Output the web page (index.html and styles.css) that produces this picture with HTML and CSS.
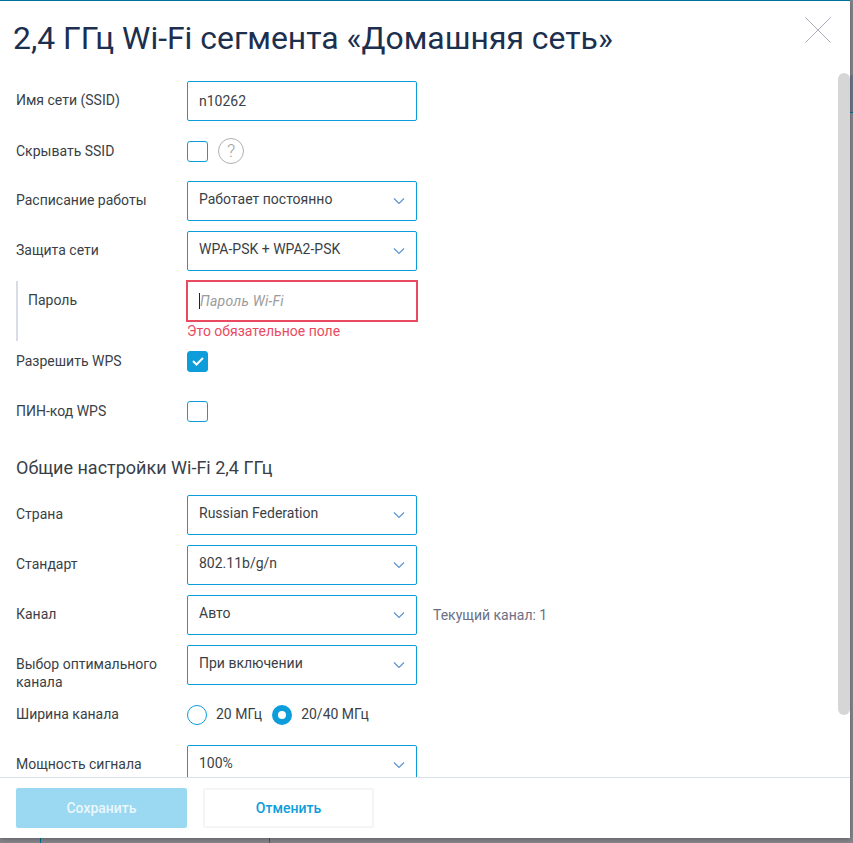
FILE: index.html
```html
<!DOCTYPE html>
<html lang="ru">

<head>
    <meta charset="UTF-8">
    <title>Wi-Fi</title>
    <link rel="stylesheet" href="styles.css">
</head>

<body>

    <div class="backdrop">
        <div class="backdrop__piece backdrop__piece--panel"></div>
        <div class="backdrop__piece backdrop__piece--line-right"></div>
        <div class="backdrop__piece backdrop__piece--line-a"></div>
        <div class="backdrop__piece backdrop__piece--line-b"></div>

        <div class="modal">
            <div class="modal__head">
                <h1 class="modal__title">2,4 ГГц Wi-Fi сегмента «Домашняя сеть»</h1>
                <svg class="modal__close" width="26" height="26" viewBox="0 0 26 26">
                    <path d="M0.5 0.5L25.5 25.5M25.5 0.5L0.5 25.5" stroke="#a9adbd" stroke-width="1" fill="none"/>
                </svg>
            </div>

            <div class="modal__body">
                <div class="modal__scroll">
                    <div class="row">
                        <div class="row__label">Имя сети (SSID)</div>
                        <div class="field field--input">n10262</div>
                    </div>
                    <div class="row">
                        <div class="row__label row__label--check">Скрывать SSID</div>
                        <div class="check"></div>
                        <div class="hint">?</div>
                    </div>
                    <div class="row">
                        <div class="row__label">Расписание работы</div>
                        <div class="field">Работает постоянно
                            <svg class="field__arrow" width="12" height="8" viewBox="0 0 12 8"><path d="M1 1.5L6 6.5L11 1.5" stroke="#5c93cf" stroke-width="1.2" fill="none"/></svg>
                        </div>
                    </div>
                    <div class="row">
                        <div class="row__label">Защита сети</div>
                        <div class="field">WPA-PSK + WPA2-PSK
                            <svg class="field__arrow" width="12" height="8" viewBox="0 0 12 8"><path d="M1 1.5L6 6.5L11 1.5" stroke="#5c93cf" stroke-width="1.2" fill="none"/></svg>
                        </div>
                    </div>
                    <div class="row row--nested">
                        <div class="row__label row__label--nested">Пароль</div>
                        <div class="row__control">
                            <div class="field field--error"><span class="caret"></span><span class="placeholder">Пароль Wi-Fi</span></div>
                            <div class="error-text">Это обязательное поле</div>
                        </div>
                    </div>
                    <div class="row">
                        <div class="row__label row__label--check">Разрешить WPS</div>
                        <div class="check check--on">
                            <svg width="12" height="10" viewBox="0 0 12 10"><path d="M1 5L4.5 8.5L11 2" stroke="#fff" stroke-width="2" fill="none"/></svg>
                        </div>
                    </div>
                    <div class="row">
                        <div class="row__label row__label--check">ПИН-код WPS</div>
                        <div class="check"></div>
                    </div>

                    <h2 class="section-title">Общие настройки Wi-Fi 2,4 ГГц</h2>

                    <div class="row">
                        <div class="row__label">Страна</div>
                        <div class="field">Russian Federation
                            <svg class="field__arrow" width="12" height="8" viewBox="0 0 12 8"><path d="M1 1.5L6 6.5L11 1.5" stroke="#5c93cf" stroke-width="1.2" fill="none"/></svg>
                        </div>
                    </div>
                    <div class="row">
                        <div class="row__label">Стандарт</div>
                        <div class="field">802.11b/g/n
                            <svg class="field__arrow" width="12" height="8" viewBox="0 0 12 8"><path d="M1 1.5L6 6.5L11 1.5" stroke="#5c93cf" stroke-width="1.2" fill="none"/></svg>
                        </div>
                    </div>
                    <div class="row">
                        <div class="row__label">Канал</div>
                        <div class="field">Авто
                            <svg class="field__arrow" width="12" height="8" viewBox="0 0 12 8"><path d="M1 1.5L6 6.5L11 1.5" stroke="#5c93cf" stroke-width="1.2" fill="none"/></svg>
                        </div>
                        <div class="row__note">Текущий канал: 1</div>
                    </div>
                    <div class="row">
                        <div class="row__label row__label--two">Выбор оптимального канала</div>
                        <div class="field">При включении
                            <svg class="field__arrow" width="12" height="8" viewBox="0 0 12 8"><path d="M1 1.5L6 6.5L11 1.5" stroke="#5c93cf" stroke-width="1.2" fill="none"/></svg>
                        </div>
                    </div>
                    <div class="row">
                        <div class="row__label">Ширина канала</div>
                        <div class="radio"></div>
                        <div class="radio__text">20 МГц</div>
                        <div class="radio radio--on"></div>
                        <div class="radio__text">20/40 МГц</div>
                    </div>
                    <div class="row">
                        <div class="row__label">Мощность сигнала</div>
                        <div class="field">100%
                            <svg class="field__arrow" width="12" height="8" viewBox="0 0 12 8"><path d="M1 1.5L6 6.5L11 1.5" stroke="#5c93cf" stroke-width="1.2" fill="none"/></svg>
                        </div>
                    </div>
                </div>
                <div class="scrollbar"></div>
            </div>

            <div class="modal__foot">
                <button class="btn btn--save">Сохранить</button>
                <button class="btn btn--cancel">Отменить</button>
            </div>
        </div>
    </div>

</body>

</html>
```

FILE: styles.css
```css
* {
    box-sizing: border-box;
}

html, body {
    margin: 0;
    height: 100%;
    overflow: hidden;
}

body {
    font-family: Roboto, sans-serif;
    color: #3a3f47;
    background: #85858b;
}

.backdrop {
    position: relative;
    height: 843px;
}

/* bits of the page behind the dialog */
.backdrop__piece {
    position: absolute;
}

.backdrop__piece--panel {
    left: 850px;
    top: 75px;
    width: 3px;
    height: 37px;
    background: #6f7686;
}

.backdrop__piece--line-right {
    left: 850px;
    top: 112px;
    width: 3px;
    height: 1px;
    background: #00709c;
}

.backdrop__piece--line-a {
    left: 40px;
    top: 838px;
    width: 1px;
    height: 5px;
    background: #00709c;
}

.backdrop__piece--line-b {
    left: 269px;
    top: 838px;
    width: 1px;
    height: 5px;
    background: #00709c;
}

.modal {
    position: relative;
    width: 850px;
    height: 838px;
    background: #fff;
    border-top: 1px solid #00709c;
    box-shadow: 0 1px 5px rgba(0, 0, 0, 0.3);
    display: flex;
    flex-direction: column;
}

.modal__head {
    height: 72px;
    padding: 19px 0 0 13px;
    display: flex;
    justify-content: space-between;
    flex: none;
}

.modal__title {
    margin: 0;
    font-size: 31.9px;
    font-weight: 400;
    line-height: 36px;
    color: #1c2f4f;
    white-space: nowrap;
}

.modal__close {
    margin: -3px 19px 0 0;
}

.modal__body {
    flex: 1;
    min-height: 0;
    display: flex;
    overflow: hidden;
}

.modal__scroll {
    flex: 1;
    min-width: 0;
    padding: 8px 0 0 16px;
}

.scrollbar {
    width: 12px;
    height: 642px;
    background: #d6d6d6;
    border-radius: 6px;
    flex: none;
}

.row {
    display: flex;
    align-items: center;
    height: 40px;
    margin-bottom: 10px;
    font-size: 14px;
}

.row--nested {
    align-items: flex-start;
    height: 60px;
    margin-bottom: 0;
}

.row__label {
    width: 171px;
    flex: none;
    line-height: 18px;
    margin-bottom: 2px;
}

.row__label--check {
    margin-bottom: 0;
}

.row__label--nested {
    height: 60px;
    margin-bottom: 0;
    border-left: 2px solid #d8dbe8;
    padding: 10px 0 0 10px;
}

.row__label--two {
    margin-bottom: 0;
    padding-top: 16px;
    padding-right: 10px;
}

.row__control {
    width: 230px;
}

.row__note {
    margin-left: 16px;
    color: #6b7085;
}

.field {
    position: relative;
    width: 230px;
    height: 40px;
    flex: none;
    border: 1px solid #0d9ddb;
    border-radius: 2px;
    padding: 0 11px 4px;
    display: flex;
    align-items: center;
    line-height: 18px;
}

.field--input {
    padding-bottom: 1px;
}

.field--error {
    border-color: #ea4a5f;
    box-shadow: 0 0 0 1px #ea4a5f;
    border-radius: 0;
    padding-bottom: 0;
}

.field__arrow {
    position: absolute;
    right: 11px;
    top: 15px;
}

.caret {
    width: 1px;
    height: 16px;
    background: #222;
    flex: none;
}

.placeholder {
    color: #9b9b9b;
    font-style: italic;
    letter-spacing: 0.25px;
}

.error-text {
    color: #ea4a5f;
    line-height: 20px;
}

.check {
    width: 21px;
    height: 21px;
    border: 1px solid #0d9ddb;
    border-radius: 3px;
    flex: none;
    display: flex;
    align-items: center;
    justify-content: center;
}

.check--on {
    background: #0d9ddb;
}

.hint {
    width: 26px;
    height: 26px;
    margin-left: 10px;
    border: 1px solid #b0b0b0;
    border-radius: 50%;
    color: #a0a0a0;
    font-size: 18px;
    font-weight: 300;
    text-align: center;
    line-height: 24px;
}

.section-title {
    margin: 26px 0 16px;
    font-size: 18px;
    font-weight: 400;
    line-height: 22px;
}

.radio {
    width: 20px;
    height: 20px;
    border: 1px solid #0d9ddb;
    border-radius: 50%;
    flex: none;
}

.radio--on {
    border: 6px solid #0d9ddb;
}

.radio__text {
    margin: 0 10px 2px 9px;
}

.modal__foot {
    height: 61px;
    flex: none;
    border-top: 1px solid #d8e2ea;
    padding: 10px 16px 0;
    display: flex;
    gap: 16px;
}

.btn {
    width: 171px;
    height: 40px;
    border-radius: 2px;
    font-family: Roboto, sans-serif;
    font-size: 14px;
    font-weight: 500;
}

.btn--save {
    background: #9bd8f1;
    border: none;
    color: #eaf7fc;
}

.btn--cancel {
    background: #fff;
    border: 2px solid #f5f5f5;
    color: #0d9ddb;
}
```
